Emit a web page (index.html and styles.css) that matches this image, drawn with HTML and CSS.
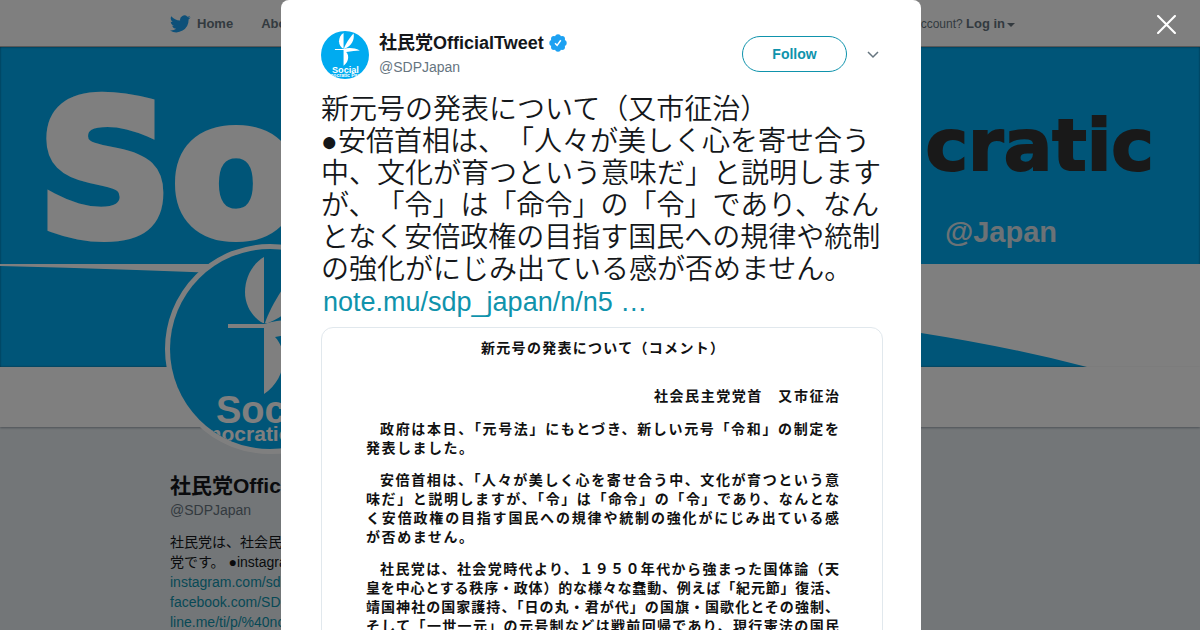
FILE: index.html
```html
<!DOCTYPE html>
<html lang="ja">
<head>
<meta charset="utf-8">
<meta name="viewport" content="width=device-width, initial-scale=1">
<title>社民党OfficialTweet</title>
<link rel="stylesheet" href="styles.css">
</head>
<body>
<svg class="symbols" aria-hidden="true">
  <symbol id="dove" viewBox="0 0 200 200">
    <rect width="200" height="200" fill="#00abf0"/>
    <g fill="#fff">
      <path d="M94 8C82 15 75 29 75 43C75 57 83 69 93 74L94 74Z"/>
      <path d="M95 74C100 58 120 25 136 10C140 34 129 62 98 74Z"/>
      <path d="M58 75H94C116 68 138 70 162 81C144 82 128 84 105 88C120 104 114 132 94 145V79H58Z"/>
      <text x="46" y="174" font-family="Liberation Sans" font-weight="700" font-size="38">Social</text>
      <text x="6" y="192" font-family="Liberation Sans" font-weight="700" font-size="21">Democratic Party</text>
    </g>
  </symbol>
</svg>
<div class="page">
  <header class="topbar">
    <nav class="topbar-inner">
      <a class="home" href="#"><svg class="bird" viewBox="0 0 24 20"><path d="M23.6 2.4c-.9.4-1.800.7-2.800.8 1-.6 1.800-1.600 2.200-2.700-.9.600-2 1-3.100 1.200A4.900 4.900 0 0 0 11.600 6.100C7.500 5.900 3.900 3.900 1.500 1c-.4.7-.7 1.600-.7 2.500 0 1.700.9 3.200 2.200 4.100-.8 0-1.600-.2-2.200-.6 0 2.400 1.700 4.400 3.900 4.900-.7.200-1.500.2-2.200.1.600 2 2.400 3.400 4.600 3.400A9.900 9.900 0 0 1 0 17.400 13.900 13.900 0 0 0 21.200 4.900c.9-.7 1.800-1.500 2.400-2.500z"/></svg>Home</a>
      <a href="#">About</a>
      <span class="login">Have an account? <a href="#">Log in</a><i class="caret"></i></span>
    </nav>
  </header>
  <section class="banner">
    <svg class="swoosh" viewBox="0 0 1200 320" preserveAspectRatio="none" aria-hidden="true"><path d="M0 217H1200V320H1087Q1010 300 921 286Q600 234 0 219Z"/></svg>
    <div class="wordmark">
      <span class="social">Social</span>
      <span class="party"><span class="democratic"><span>Demo</span><span>cratic</span></span><span class="japan">@Japan</span></span>
    </div>
  </section>
  <div class="profile-nav"><div class="avatar-slot"><svg class="avatar-large" role="img" aria-label="社民党"><use href="#dove"/></svg></div></div>
  <aside class="profile">
    <h1>社民党OfficialTweet</h1>
    <a class="handle" href="#">@SDPJapan</a>
    <p>社民党は、社会民主<br>党です。 ●instagram<br><a href="#">instagram.com/sdp_japan</a><br><a href="#">facebook.com/SDPJapan</a><br><a href="#">line.me/ti/p/%40nor0530</a></p>
  </aside>
</div>
<div class="overlay">
  <button class="close" aria-label="Close"><svg viewBox="0 0 18 18"><path d="M1 1l16 16M17 1L1 17"/></svg></button>
  <article class="tweet" role="dialog" aria-label="Tweet">
    <header class="tweet-head">
      <svg class="avatar" role="img" aria-label="社民党"><use href="#dove"/></svg>
      <div class="who">
        <strong>社民党OfficialTweet <svg class="badge" viewBox="0 0 18 18"><g fill="#1da1f2"><circle cx="9" cy="9" r="7"/><circle cx="9" cy="3.200" r="2.900"/><circle cx="13.100" cy="4.900" r="2.900"/><circle cx="14.800" cy="9" r="2.900"/><circle cx="13.100" cy="13.100" r="2.900"/><circle cx="9" cy="14.800" r="2.900"/><circle cx="4.900" cy="13.100" r="2.900"/><circle cx="3.200" cy="9" r="2.900"/><circle cx="4.900" cy="4.900" r="2.900"/></g><path d="M6 9.300l2.100 2.100 3.700-5.200" fill="none" stroke="#fff" stroke-width="1.500"/></svg></strong>
        <a class="handle" href="#">@SDPJapan</a>
      </div>
      <button class="follow">Follow</button>
      <button class="more" aria-label="More"><svg viewBox="0 0 12 8"><path d="M1 1l5 5 5-5"/></svg></button>
    </header>
    <p class="tweet-text">新元号の発表について（又市征治）<br>●安倍首相は、「人々が美しく心を寄せ合う中、文化が育つという意味だ」と説明しますが、「令」は「命令」の「令」であり、なんとなく安倍政権の目指す国民への規律や統制の強化がにじみ出ている感が否めません。<br><a href="#">note.mu/sdp_japan/n/n5 …</a></p>
    <div class="document">
      <p class="doc-title">新元号の発表について（コメント）</p>
      <p class="doc-author">社会民主党党首　又市征治</p>
      <p><span class="line first">政府は本日、「元号法」にもとづき、新しい元号「令和」の制定を</span><span class="last">発表しました。</span></p>
      <p><span class="line first">安倍首相は、「人々が美しく心を寄せ合う中、文化が育つという意</span><span class="line">味だ」と説明しますが、「令」は「命令」の「令」であり、なんとな</span><span class="line">く安倍政権の目指す国民への規律や統制の強化がにじみ出ている感</span><span class="last">が否めません。</span></p>
      <p><span class="line first">社民党は、社会党時代より、１９５０年代から強まった国体論（天</span><span class="line">皇を中心とする秩序・政体）的な様々な蠢動、例えば「紀元節」復活、</span><span class="line">靖国神社の国家護持、「日の丸・君が代」の国旗・国歌化とその強制、</span><span class="line">そして「一世一元」の元号制などは戦前回帰であり、現行憲法の国民</span></p>
    </div>
  </article>
</div>
</body>
</html>
```
FILE: styles.css
```css
* { box-sizing: border-box; }
body {
  margin: 0;
  height: 100vh;
  overflow: hidden;
  background: #e6ecf0;
  color: #14171a;
  font: 14px/20px "Liberation Sans", "Noto Sans CJK JP", sans-serif;
}
a { color: #0f93ac; text-decoration: none; }
p, h1 { margin: 0; }
button { padding: 0; border: 0; background: none; font: inherit; cursor: pointer; }
.symbols { position: absolute; width: 0; height: 0; }

.topbar { height: 47px; background: #fff; border-bottom: 1px solid #b0b0b0; }
.topbar-inner {
  display: flex;
  align-items: center;
  gap: 28px;
  height: 46px;
  padding: 2px 185px 0 170px;
  font-size: 13px;
  font-weight: 700;
}
.topbar a { color: #66757f; }
.home { display: flex; align-items: center; gap: 6px; }
.bird { width: 21px; height: 18px; fill: #1da1f2; }
.login { margin-left: auto; font-size: 12px; font-weight: 400; color: #66757f; }
.login a { font-size: 13px; font-weight: 700; }
.caret {
  display: inline-block;
  margin-left: 2px;
  border: 4px solid transparent;
  border-top-color: #66757f;
  border-bottom: 0;
  vertical-align: middle;
}

.banner {
  position: relative;
  height: 320px;
  overflow: hidden;
  background: #00abf0;
  box-shadow: inset 0 0 2px #004466;
}
.swoosh { position: absolute; inset: 0; width: 100%; height: 100%; fill: #fff; }
.wordmark {
  position: relative;
  display: flex;
  justify-content: space-between;
  padding: 0 46px 0 38px;
  font-family: "DejaVu Sans", sans-serif;
  font-weight: 700;
  color: #fff;
}
.social { width: 500px; font-size: 186px; line-height: 246px; -webkit-text-stroke: 10px #fff; }
.party { display: flex; flex-direction: column; align-items: flex-end; padding-top: 56px; }
.democratic { display: flex; gap: 5px; font-size: 72px; line-height: 84px; color: #333; -webkit-text-stroke: 2px #333; }
.japan { padding: 29px 97px 0 0; font: 700 29px/32px "Liberation Sans", sans-serif; color: #d8e4ec; }

.profile-nav {
  position: relative;
  height: 60px;
  padding-left: 165px;
  background: #fff;
  box-shadow: 0 1px 2px #9aa5ad;
}
.avatar-slot { position: absolute; bottom: -27px; width: 210px; height: 210px; }
.avatar-large { width: 210px; height: 210px; border: 5px solid #fff; border-radius: 50%; background: #fff; }
.profile { width: 270px; margin: 47px 0 0 170px; }
.profile h1 { font-size: 21px; line-height: 24px; white-space: nowrap; }
.handle { color: #66757f; }
.profile .handle { display: block; margin: 2px 0 12px; }

.overlay {
  position: fixed;
  inset: 0;
  display: flex;
  justify-content: center;
  background: rgba(0, 0, 0, .5);
}
.close { position: absolute; top: 15px; right: 24px; width: 19px; height: 19px; }
.close svg { display: block; fill: none; stroke: #fff; stroke-width: 2; stroke-linecap: round; }
.tweet {
  width: 640px;
  margin-left: 2px;
  padding: 31px 38px 0 40px;
  overflow: hidden;
  border-radius: 8px 8px 0 0;
  background: #fff;
}
.tweet-head { display: flex; align-items: center; }
.avatar { width: 48px; height: 48px; border-radius: 50%; }
.who { display: flex; flex: 1; flex-direction: column; margin-left: 10px; }
.who strong { display: flex; align-items: center; gap: 5px; font-size: 18px; line-height: 24px; }
.who .handle { line-height: 24px; }
.badge { width: 18px; height: 18px; }
.follow {
  width: 105px;
  height: 36px;
  margin-bottom: 2px;
  border: 1px solid #0f93ac;
  border-radius: 18px;
  color: #0f93ac;
  font-weight: 700;
}
.more { width: 12px; margin: 0 4px 0 20px; }
.more svg { display: block; fill: none; stroke: #66757f; stroke-width: 1.500; }
.tweet-text { margin-top: 15px; font-size: 28px; font-weight: 350; line-height: 32px; text-spacing-trim: space-all; }
.tweet-text a { margin-left: 2px; font-size: 27px; }

.document {
  height: 760px;
  margin-top: 9px;
  padding: 10px 43px 0 44px;
  border: 1px solid #e1e8ed;
  border-radius: 12px;
  font: 700 14px/19px "Noto Sans CJK JP", sans-serif;
  color: #111;
}
.document p { margin-bottom: 13px; }
.document .doc-title { width: 243px; margin: 0 auto 29px; text-align-last: justify; }
.document .doc-author { width: 185px; margin: 0 0 14px auto; text-align-last: justify; }
.line { display: block; text-align-last: justify; white-space: nowrap; }
.first { padding-left: 14px; }
.last { display: block; width: 107px; text-align-last: justify; }
```
